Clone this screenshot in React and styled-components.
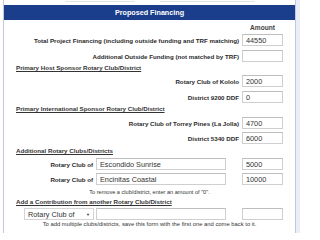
import React from "react";
import styled, { createGlobalStyle } from "styled-components";

const GlobalStyle = createGlobalStyle`
    html, body {
        margin: 0;
        padding: 0;
        background: #ffffff;
        font-family: "Liberation Sans", Arial, sans-serif;
    }
`;

const App = () => {
    return (
        <Page>
            <GlobalStyle />
            <LeftGap />
            <Panel>
                <TopStrip>
                    <Ghost $w={70} />
                    <Ghost $w={95} />
                </TopStrip>
                <Header>Proposed Financing</Header>
                <Body>
                    <AmountHead>
                        <span>Amount</span>
                    </AmountHead>
                    <Row $top={2}>
                        <Label>Total Project Financing (including outside funding and TRF matching)</Label>
                        <Amount defaultValue="44550" />
                    </Row>
                    <Row $top={4}>
                        <Label>Additional Outside Funding (not matched by TRF)</Label>
                        <Amount defaultValue="" />
                    </Row>
                    <Section $top={2}>Primary Host Sponsor Rotary Club/District</Section>
                    <Row $top={3}>
                        <Label>Rotary Club of Kololo</Label>
                        <Amount defaultValue="2000" />
                    </Row>
                    <Row $top={4}>
                        <Label>District 9200 DDF</Label>
                        <Amount defaultValue="0" />
                    </Row>
                    <Section $top={2}>Primary International Sponsor Rotary Club/District</Section>
                    <Row $top={4}>
                        <Label>Rotary Club of Torrey Pines (La Jolla)</Label>
                        <Amount defaultValue="4700" />
                    </Row>
                    <Row $top={3}>
                        <Label>District 5340 DDF</Label>
                        <Amount defaultValue="6000" />
                    </Row>
                    <Section $top={3}>Additional Rotary Clubs/Districts</Section>
                    <ClubRow $top={3}>
                        <ClubLabel>Rotary Club of</ClubLabel>
                        <Name defaultValue="Escondido Sunrise" />
                        <Amount defaultValue="5000" />
                    </ClubRow>
                    <ClubRow $top={3}>
                        <ClubLabel>Rotary Club of</ClubLabel>
                        <Name defaultValue="Encinitas Coastal" />
                        <Amount defaultValue="10000" />
                    </ClubRow>
                    <Note $top={3} $size={5.6}>To remove a club/district, enter an amount of "0".</Note>
                    <Section $top={2}>Add a Contribution from another Rotary Club/District</Section>
                    <ClubRow $top={2}>
                        <Select>
                            <span>Rotary Club of</span>
                            <Caret>▼</Caret>
                        </Select>
                        <Name defaultValue="" />
                        <Amount defaultValue="" />
                    </ClubRow>
                    <Note $top={0} $size={5.85}>
                        To add multiple clubs/districts, save this form with the first one and come back to it.
                    </Note>
                </Body>
            </Panel>
            <RightGutter />
        </Page>
    );
};

const Page = styled.div`
    display: flex;
    width: 300px;
    height: 233px;
    overflow: hidden;
`;

const LeftGap = styled.div`
    width: 3px;
    flex: none;
`;

const Panel = styled.div`
    flex: none;
    width: 291px;
    border-left: 1px solid #c3c9dc;
    border-right: 1px solid #c3c9dc;
    display: flex;
    flex-direction: column;
`;

const RightGutter = styled.div`
    flex: 1;
    background: #eceef7;
`;

const TopStrip = styled.div`
    height: 5px;
    display: flex;
    justify-content: center;
    gap: 25px;
    padding-left: 20px;
`;

const Ghost = styled.div`
    width: ${(p) => p.$w}px;
    height: 1px;
    border-bottom: 1px solid #e2e2e2;
`;

const Header = styled.div`
    height: 15px;
    background: #1b3e8c;
    color: #ffffff;
    font-weight: bold;
    font-size: 7.2px;
    display: flex;
    align-items: center;
    justify-content: center;
`;

const Body = styled.div`
    display: flex;
    flex-direction: column;
    padding: 0 12px 0 12px;
`;

const AmountHead = styled.div`
    margin-top: 4px;
    height: 8px;
    display: flex;
    justify-content: flex-end;
    span {
        width: 41px;
        padding-left: 8px;
        text-align: center;
        font-size: 6.6px;
        font-weight: bold;
        color: #444;
        line-height: 8px;
    }
`;

const Row = styled.div`
    margin-top: ${(p) => p.$top}px;
    height: 12px;
    display: flex;
    justify-content: flex-end;
    align-items: center;
    gap: 3px;
`;

const Label = styled.span`
    font-size: 6.2px;
    font-weight: bold;
    color: #2a2a2a;
    white-space: nowrap;
`;

const Field = styled.input`
    box-sizing: border-box;
    height: 12px;
    border: 1px solid #cfcfcf;
    border-top-color: #bdbdbd;
    background: #fff;
    padding: 0 3px;
    margin: 0;
    font-family: "Liberation Sans", Arial, sans-serif;
    font-size: 7.3px;
    color: #333;
    outline: none;
`;

const Amount = styled(Field)`
    width: 41px;
    flex: none;
`;

const Name = styled(Field)`
    width: 130px;
    flex: none;
    margin-right: 16px;
`;

const ClubRow = styled.div`
    margin-top: ${(p) => p.$top}px;
    height: 12px;
    display: flex;
    align-items: center;
    justify-content: flex-end;
`;

const ClubLabel = styled(Label)`
    margin-right: 3px;
`;

const Select = styled.div`
    box-sizing: border-box;
    width: 70px;
    height: 12px;
    margin-right: 2px;
    border: 1px solid #d4d4d4;
    padding: 0 3px;
    display: flex;
    align-items: center;
    justify-content: space-between;
    font-size: 7.3px;
    color: #333;
`;

const Caret = styled.span`
    font-size: 4px;
    color: #333;
`;

const Section = styled.div`
    margin-top: ${(p) => p.$top}px;
    height: 8px;
    line-height: 8px;
    font-size: 6.2px;
    font-weight: bold;
    color: #333;
    text-decoration: underline;
    white-space: nowrap;
`;

const Note = styled.div`
    margin-top: ${(p) => p.$top}px;
    height: 8px;
    line-height: 8px;
    text-align: center;
    font-size: ${(p) => p.$size}px;
    color: #333;
    white-space: nowrap;
`;

export default App;
